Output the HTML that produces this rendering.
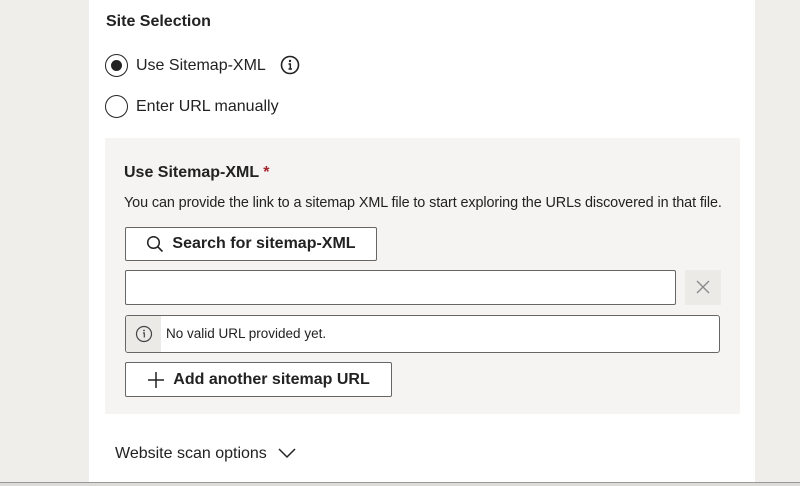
<!DOCTYPE html>
<html><head><style>
*{margin:0;padding:0;box-sizing:border-box}
body{width:800px;height:486px;background:#efeeeb;font-family:"Liberation Sans",sans-serif;color:#222;position:relative;overflow:hidden}
.card{position:absolute;left:89px;top:0;width:666px;height:482px;background:#fff}
.bl{position:absolute;left:0;top:482px;width:800px;height:4px;background:#dcdbd8;border-top:1px solid #999}
.a{position:absolute;white-space:nowrap}
.radio{position:absolute;width:23px;height:23px;border:1.5px solid #222;border-radius:50%}
.panel{position:absolute;left:105px;top:138px;width:635px;height:276px;background:#f5f4f2}
.btn{position:absolute;background:#fff;border:1px solid #666;border-radius:2px;font-weight:bold;font-size:16px;display:flex;align-items:center;justify-content:center;gap:8px}
</style></head><body>
<div class="card"></div>
<div class="a" style="left:106px;top:13px;font-weight:bold;font-size:16px">Site Selection</div>
<div class="radio" style="left:105px;top:54px"><div style="position:absolute;left:4.5px;top:4.5px;width:11px;height:11px;border-radius:50%;background:#222"></div></div>
<div class="a" style="left:136px;top:57px;font-size:16px">Use Sitemap-XML</div>
<svg class="a" style="left:280px;top:55px" width="20" height="20" viewBox="0 0 20 20"><circle cx="10" cy="10" r="8.5" fill="none" stroke="#222" stroke-width="1.6"/><circle cx="10" cy="6" r="1.2" fill="#222"/><path d="M8.5 9h1.8v5M8.5 14h3.5" stroke="#222" stroke-width="1.5" fill="none"/></svg>
<div class="radio" style="left:105px;top:95px"></div>
<div class="a" style="left:136px;top:98px;font-size:16px">Enter URL manually</div>
<div class="panel"></div>
<div class="a" style="left:124px;top:164px;font-weight:bold;font-size:16px">Use Sitemap-XML <span style="color:#a3242b">*</span></div>
<div class="a" style="left:124px;top:195px;font-size:14.4px;letter-spacing:-0.1px">You can provide the link to a sitemap XML file to start exploring the URLs discovered in that file.</div>
<div class="btn" style="left:125px;top:227px;width:252px;height:34px"><svg width="18" height="18" viewBox="0 0 18 18"><circle cx="7.5" cy="7.5" r="5.8" fill="none" stroke="#222" stroke-width="1.5"/><path d="M11.8 11.8L16.5 16.5" stroke="#222" stroke-width="1.6"/></svg>Search for sitemap-XML</div>
<div class="a" style="left:125px;top:270px;width:551px;height:35px;background:#fff;border:1px solid #666;border-radius:2px"></div>
<div class="a" style="left:685px;top:270px;width:36px;height:35px;background:#ebeae7"><svg width="36" height="35"><path d="M12 11l12 12M24 11L12 23" stroke="#888" stroke-width="1.3"/></svg></div>
<div class="a" style="left:125px;top:315px;width:595px;height:38px;background:#fff;border:1px solid #666;border-radius:3px;overflow:hidden">
<div style="position:absolute;left:0;top:0;width:35px;height:36px;background:#ebeae7"></div>
<svg style="position:absolute;left:9px;top:9px" width="18" height="18" viewBox="0 0 18 18"><circle cx="9" cy="9" r="7.5" fill="none" stroke="#444" stroke-width="1.2"/><circle cx="9" cy="5.5" r="0.9" fill="#444"/><path d="M8 8h1.3v4.5" stroke="#444" stroke-width="1.2" fill="none"/></svg>
<div style="position:absolute;left:40px;top:10px;font-size:13.5px">No valid URL provided yet.</div></div>
<div class="btn" style="left:125px;top:362px;width:267px;height:35px"><svg width="18" height="18"><path d="M9 1v16M1 9h16" stroke="#222" stroke-width="1.5"/></svg>Add another sitemap URL</div>
<div class="a" style="left:115px;top:445px;font-size:16px">Website scan options</div>
<svg class="a" style="left:277px;top:446px" width="20" height="14"><path d="M2 3l8 8 8-8" fill="none" stroke="#222" stroke-width="1.5"/></svg>
<div class="bl"></div>
</body></html>
